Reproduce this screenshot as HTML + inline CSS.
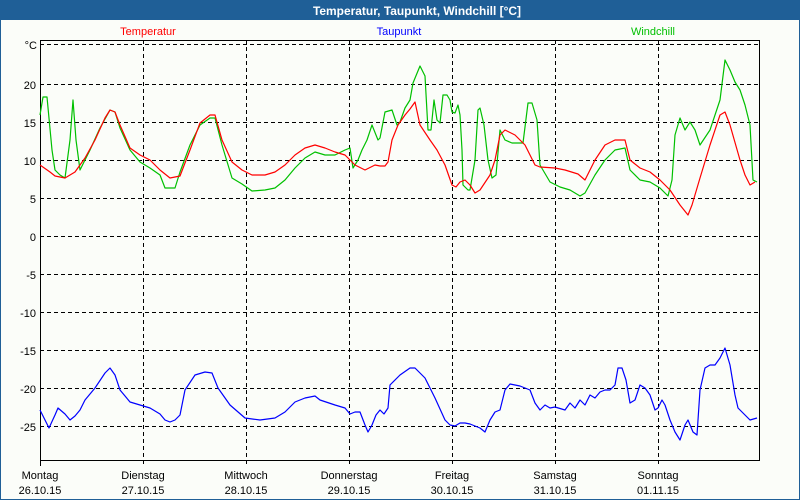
<!DOCTYPE html>
<html><head><meta charset="utf-8"><style>
html,body{margin:0;padding:0;}
body{width:800px;height:500px;overflow:hidden;background:#fbfdf9;font-family:"Liberation Sans",sans-serif;}
</style></head><body>
<svg width="800" height="500" xmlns="http://www.w3.org/2000/svg" style="display:block">
<rect x="0" y="0" width="800" height="500" fill="#fbfdf9"/>
<rect x="0.5" y="0.5" width="799" height="499" fill="none" stroke="#1f5f97"/>
<rect x="0" y="0" width="800" height="20" fill="#1f5f97"/>
<text x="417" y="15" text-anchor="middle" fill="#fff" font-size="12" font-weight="bold" font-family="Liberation Sans, sans-serif" textLength="208" lengthAdjust="spacingAndGlyphs">Temperatur, Taupunkt, Windchill [°C]</text>
<g font-size="11" font-family="Liberation Sans, sans-serif">
<text x="148" y="35" text-anchor="middle" fill="#ff0000">Temperatur</text>
<text x="399" y="35" text-anchor="middle" fill="#0000ff">Taupunkt</text>
<text x="653" y="35" text-anchor="middle" fill="#00c000">Windchill</text>
</g>
<g stroke="#000" stroke-dasharray="4,3" stroke-width="1">
<line x1="40" x2="760" y1="44.5" y2="44.5"/><line x1="40" x2="760" y1="84.5" y2="84.5"/><line x1="40" x2="760" y1="122.5" y2="122.5"/><line x1="40" x2="760" y1="160.5" y2="160.5"/><line x1="40" x2="760" y1="198.5" y2="198.5"/><line x1="40" x2="760" y1="236.5" y2="236.5"/><line x1="40" x2="760" y1="274.5" y2="274.5"/><line x1="40" x2="760" y1="312.5" y2="312.5"/><line x1="40" x2="760" y1="350.5" y2="350.5"/><line x1="40" x2="760" y1="388.5" y2="388.5"/><line x1="40" x2="760" y1="426.5" y2="426.5"/>
<line y1="40" y2="466" x1="143.5" x2="143.5"/><line y1="40" y2="466" x1="246.5" x2="246.5"/><line y1="40" y2="466" x1="349.5" x2="349.5"/><line y1="40" y2="466" x1="452.5" x2="452.5"/><line y1="40" y2="466" x1="555.5" x2="555.5"/><line y1="40" y2="466" x1="658.5" x2="658.5"/>
</g>
<rect x="40.5" y="40.5" width="719" height="420" fill="none" stroke="#000"/>
<line x1="40.5" x2="40.5" y1="460" y2="466" stroke="#000"/>
<g font-size="11" font-family="Liberation Sans, sans-serif" fill="#000" text-anchor="end">
<text x="37" y="49">°C</text><text x="36" y="89">20</text><text x="36" y="127">15</text><text x="36" y="165">10</text><text x="36" y="203">5</text><text x="36" y="241">0</text><text x="36" y="279">-5</text><text x="36" y="317">-10</text><text x="36" y="355">-15</text><text x="36" y="393">-20</text><text x="36" y="431">-25</text>
</g>
<g font-size="11" font-family="Liberation Sans, sans-serif" fill="#000" text-anchor="middle">
<text x="40" y="479">Montag</text><text x="40" y="494">26.10.15</text>
<text x="143" y="479">Dienstag</text><text x="143" y="494">27.10.15</text>
<text x="246" y="479">Mittwoch</text><text x="246" y="494">28.10.15</text>
<text x="349" y="479">Donnerstag</text><text x="349" y="494">29.10.15</text>
<text x="452" y="479">Freitag</text><text x="452" y="494">30.10.15</text>
<text x="555" y="479">Samstag</text><text x="555" y="494">31.10.15</text>
<text x="658" y="479">Sonntag</text><text x="658" y="494">01.11.15</text>
</g>
<g fill="none" stroke-width="1.2" stroke-linejoin="round">
<polyline stroke="#00c000" points="40,115 43,97 47,97 52,150 55,170 60,175 65,178 70,140 73,100 76,140 80,170 90,150 100,128 110,110 115,112 120,128 130,150 140,162 150,168 160,175 165,188 175,188 180,172 190,145 200,125 210,118 215,118 222,145 232,178 242,184 252,191 265,190 275,188 285,180 295,168 305,158 315,152 325,155 335,155 345,150 350,148 353,168 358,160 362,150 367,140 372,125 378,140 380,138 385,112 392,110 397,125 400,122 405,108 410,100 413,83 420,66 425,76 428,130 431,130 434,100 437,120 440,123 443,95 447,95 450,100 452,112 455,113 458,105 460,115 462,150 463,185 468,190 470,190 475,160 478,110 480,108 484,125 488,160 492,178 496,175 500,130 505,140 512,143 523,143 528,103 532,103 537,120 540,165 550,182 560,187 570,190 580,196 585,193 595,175 605,160 615,150 625,148 630,170 640,180 650,182 660,188 668,196 672,180 675,135 680,118 685,130 690,122 695,130 700,145 710,130 720,100 725,60 730,70 735,82 740,90 745,105 750,125 753,180 757,182"/>
<polyline stroke="#ff0000" points="40,165 50,172 55,176 65,178 75,172 85,158 95,140 105,118 110,110 115,112 120,125 130,148 140,155 150,160 160,170 170,178 180,176 190,150 200,123 210,115 215,115 222,140 232,162 242,170 252,175 265,175 275,172 285,165 295,155 305,148 315,145 325,148 335,152 345,155 355,165 365,170 375,165 380,166 385,166 388,162 392,140 398,125 405,115 410,109 415,102 420,125 430,140 437,150 445,165 452,185 456,187 460,182 465,180 470,185 475,193 480,190 490,175 495,160 500,135 505,130 515,135 525,145 535,165 540,167 555,168 565,170 578,174 585,180 595,160 605,145 615,140 625,140 630,160 640,168 650,172 660,180 670,190 680,205 688,215 692,205 700,178 710,145 720,115 725,112 730,125 740,160 745,175 750,185 755,182"/>
<polyline stroke="#0000ff" points="40,410 45,420 49,428 55,415 58,408 65,414 70,420 75,416 80,410 85,400 95,388 105,373 110,368 115,375 120,390 130,402 140,405 150,408 160,414 165,420 170,422 175,420 180,415 185,390 195,375 205,372 212,373 218,388 230,405 245,418 260,420 275,418 285,412 295,402 305,398 315,396 320,400 335,405 345,408 350,414 355,412 360,412 365,425 368,432 372,425 376,415 380,410 384,414 388,408 390,385 400,375 410,368 415,368 425,378 435,398 445,420 450,425 455,426 460,423 465,423 470,424 480,428 485,432 490,420 495,412 500,410 505,390 510,384 520,386 530,390 535,403 540,410 545,405 550,408 555,407 565,410 570,403 575,408 580,400 585,405 590,395 595,398 600,392 605,390 610,390 615,385 618,368 622,368 626,380 630,403 635,400 640,385 645,388 650,395 655,410 658,408 662,400 665,405 670,420 675,432 680,440 685,425 688,420 693,432 697,435 700,390 705,368 710,365 715,365 720,358 725,348 730,365 735,395 738,408 745,415 750,420 757,418"/>
</g>
</svg>
</body></html>
